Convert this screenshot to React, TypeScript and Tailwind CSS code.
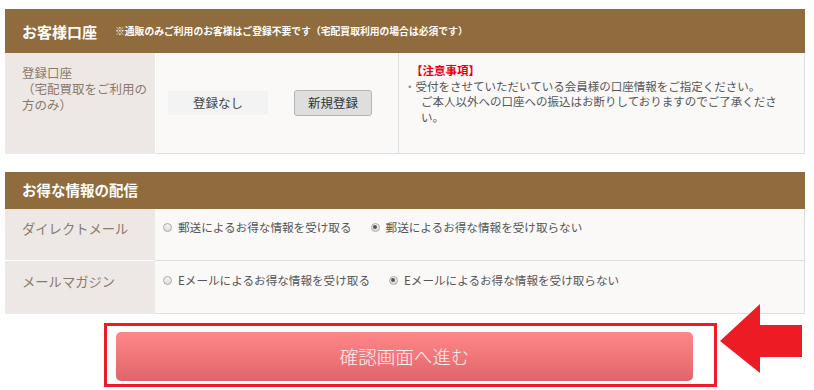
import React from "react";

function Radio({ checked }: { checked?: boolean }) {
  return (
    <span className="inline-flex h-[9px] w-[9px] shrink-0 items-center justify-center rounded-full border border-[#a9a9a9] bg-gradient-to-b from-[#f4f4f4] to-[#dcdcdc]">
      {checked ? <span className="h-[4px] w-[4px] rounded-full bg-[#555]" /> : null}
    </span>
  );
}

function Option({ label, checked }: { label: string; checked?: boolean }) {
  return (
    <span className="inline-flex items-center gap-[6px]">
      <Radio checked={checked} />
      <span>{label}</span>
    </span>
  );
}

export default function App() {
  return (
    <div
      className="relative h-[390px] w-[814px] overflow-hidden bg-white"
      style={{ fontFamily: '"Noto Sans CJK JP", "Noto Sans", sans-serif' }}
    >
      <div className="flex flex-col px-[5px] pt-[9px] w-[810px]">
        {/* Section 1 */}
        <div className="flex h-[44px] items-center bg-[#8f6b3d] pl-[17px] text-white">
          <span className="text-[15px] font-bold leading-none">お客様口座</span>
          <span className="ml-[18px] pt-[2px] text-[9.8px] font-bold leading-none">
            ※通販のみご利用のお客様はご登録不要です（宅配買取利用の場合は必須です）
          </span>
        </div>
        <div className="grid h-[101px] grid-cols-[150px_243px_1fr]">
          <div className="bg-[#ede8e6] pl-[17px] pt-[12px] text-[12.5px] leading-[16px] text-[#8a7a6c]">
            <div>登録口座</div>
            <div>（宅配買取をご利用の</div>
            <div>方のみ）</div>
          </div>
          <div className="flex items-center border-b border-l border-[#dedede] border-l-white bg-[#faf9f8] pl-[12px]">
            <div className="flex h-[24px] w-[100px] items-center justify-center bg-[#f3f3f3] text-[12.5px] text-[#444]">
              登録なし
            </div>
            <div className="ml-[26px] flex h-[26px] w-[78px] items-center justify-center rounded-[3px] border border-[#b5b5b5] bg-[#dedede] text-[12.5px] text-[#333]">
              新規登録
            </div>
          </div>
          <div className="border-b border-l border-r border-[#dedede] bg-[#faf9f8] pr-[20px] pt-[10px] text-[11.5px] leading-[15.5px] text-[#555]">
            <div className="pl-[12px] font-bold text-[#e60012]">【注意事項】</div>
            <div className="pl-[22px] indent-[-17px]">
              <span className="text-[#888]">・</span>受付をさせていただいている会員様の口座情報をご指定ください。
              <br />
              ご本人以外への口座への振込はお断りしておりますのでご了承ください。
            </div>
          </div>
        </div>

        {/* Section 2 */}
        <div className="mt-[18px] flex h-[37px] items-center bg-[#8f6b3d] pl-[17px] text-white">
          <span className="text-[14.5px] font-bold leading-none">お得な情報の配信</span>
        </div>
        <div className="grid grid-cols-[150px_1fr]">
          <div className="h-[52px] border-b border-white bg-[#ede8e6] pl-[17px] pt-[11px] text-[13.3px] leading-[18px] text-[#8a7a6c]">
            ダイレクトメール
          </div>
          <div className="flex h-[52px] items-start gap-[19px] border-b border-r border-[#dedede] bg-[#faf9f8] pl-[8px] pt-[9px] text-[11.6px] leading-[18px] text-[#555]">
            <Option label="郵送によるお得な情報を受け取る" />
            <Option label="郵送によるお得な情報を受け取らない" checked />
          </div>
          <div className="h-[53px] bg-[#ede8e6] pl-[17px] pt-[12px] text-[13.3px] leading-[18px] text-[#8a7a6c]">
            メールマガジン
          </div>
          <div className="flex h-[53px] items-start gap-[19px] border-b border-r border-[#dedede] bg-[#faf9f8] pl-[8px] pt-[10px] text-[11.6px] leading-[18px] text-[#555]">
            <Option label="Eメールによるお得な情報を受け取る" />
            <Option label="Eメールによるお得な情報を受け取らない" checked />
          </div>
        </div>

        {/* Button area */}
        <div className="ml-[99px] mt-[9px] h-[64px] w-[613px] border-[3px] border-[#ed1c24] pl-[9px] pt-[6px]">
          <div className="flex h-[49px] w-[577px] items-center justify-center rounded-[5px] bg-gradient-to-b from-[#ff8789] to-[#e0656a] text-[18.5px] font-light text-white/90">
            確認画面へ進む
          </div>
        </div>
      </div>

      {/* Arrow overlay */}
      <svg
        className="absolute left-[720px] top-[304px]"
        width="82"
        height="69"
        viewBox="0 0 82 69"
      >
        <polygon points="0,37 40,0 40,21 82,21 82,53 40,53 40,69" fill="#ed1c24" />
      </svg>
    </div>
  );
}
